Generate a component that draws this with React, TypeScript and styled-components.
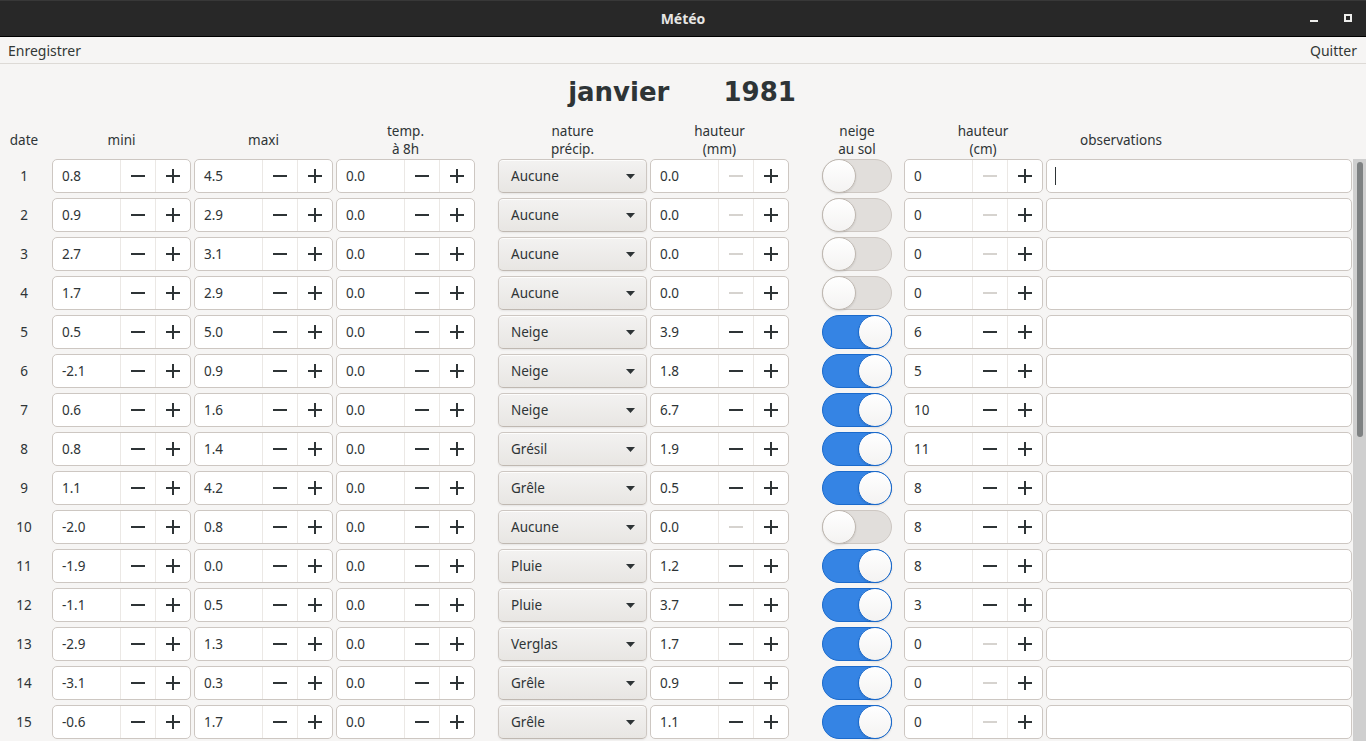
import React from "react";
import styled, { createGlobalStyle, css } from "styled-components";

const GlobalStyle = createGlobalStyle`
  html, body { margin: 0; padding: 0; height: 100%; }
  body {
    font-family: "Noto Sans", "DejaVu Sans", sans-serif;
    color: #2e3436;
    background: #f6f5f4;
    overflow: hidden;
  }
  #root { height: 100%; }
  * { box-sizing: border-box; }
`;

const Window = styled.div`
  display: flex;
  flex-direction: column;
  height: 100vh;
  background: #f6f5f4;
`;

const TitleBar = styled.header`
  display: grid;
  grid-template-columns: 1fr auto 1fr;
  align-items: center;
  height: 37px;
  background: #282828;
  border-bottom: 1px solid #000;
  box-shadow: inset 0 1px #383838;
`;

const TitleText = styled.div`
  grid-column: 2;
  font-size: 14px;
  font-weight: 700;
  color: #e6e6e4;
`;

const Controls = styled.div`
  grid-column: 3;
  display: flex;
  justify-content: flex-end;
  gap: 18px;
  padding-right: 10px;
`;

const ControlButton = styled.span`
  display: flex;
  width: 16px;
  height: 16px;
  color: #eeeeec;
`;

const MenuBar = styled.nav`
  display: flex;
  justify-content: space-between;
  align-items: center;
  height: 27px;
  padding: 0 9px 0 8px;
  border-bottom: 1px solid #dddad6;
  font-size: 14px;
  color: #333836;
`;

const MenuItem = styled.span``;

const MonthTitle = styled.h1`
  display: flex;
  justify-content: center;
  gap: 54px;
  margin: 0;
  padding-top: 13px;
  padding-right: 2px;
  font-family: "DejaVu Sans", sans-serif;
  font-weight: 700;
  font-size: 26px;
  line-height: 30px;
  color: #2e3436;
`;

const gridColumns = css`
  display: grid;
  grid-template-columns: 41px 139px 139px 139px 169px 139px 109px 139px 306px;
  column-gap: 3px;
  padding-left: 8px;
  width: 1352px;
`;

const HeaderGrid = styled.div`
  ${gridColumns};
  margin-top: 15px;
  height: 36px;
  align-items: center;
`;

const HeaderLabel = styled.div<{ $pl?: number; $pr?: number }>`
  font-size: 13.5px;
  line-height: 18px;
  text-align: center;
  color: #2e3436;
  padding-left: ${(p) => p.$pl ?? 0}px;
  padding-right: ${(p) => p.$pr ?? 0}px;
`;

const ScrollArea = styled.div`
  position: relative;
  flex: 1;
  overflow: hidden;
`;

const RowsGrid = styled.div`
  ${gridColumns};
  grid-auto-rows: 34px;
  row-gap: 5px;
  padding-top: 1px;
  align-items: center;
  font-size: 13.5px;
`;

const DateCell = styled.div`
  text-align: center;
  padding-right: 9px;
  color: #2e3436;
`;

const SpinBox = styled.div`
  display: flex;
  height: 34px;
  background: #fff;
  border: 1px solid #cdc7c2;
  border-radius: 5px;
  overflow: hidden;
`;

const SpinEntry = styled.div`
  flex: 1;
  display: flex;
  align-items: center;
  padding-left: 9px;
  color: #2e3436;
`;

const SpinButton = styled.div<{ $disabled?: boolean }>`
  display: flex;
  align-items: center;
  justify-content: center;
  width: 35px;
  border-left: 1px solid #ebe8e5;
  color: ${(p) => (p.$disabled ? "#d6d3cf" : "#2e3436")};
`;

const ComboButton = styled.div`
  justify-self: end;
  width: 149px;
  height: 34px;
  display: flex;
  align-items: center;
  justify-content: space-between;
  padding: 0 11px 0 12px;
  border: 1px solid #cdc7c2;
  border-bottom-color: #bfb8b1;
  border-radius: 5px;
  background: linear-gradient(to top, #e8e6e3, #f3f2f1);
  box-shadow: inset 0 1px rgba(255, 255, 255, 0.8), 0 1px 2px rgba(0, 0, 0, 0.07);
  color: #2e3436;
`;

const SwitchTrack = styled.div<{ $on: boolean }>`
  display: flex;
  justify-content: ${(p) => (p.$on ? "flex-end" : "flex-start")};
  margin-left: 30px;
  width: 70px;
  height: 34px;
  border-radius: 17px;
  border: 1px solid ${(p) => (p.$on ? "#1b6acb" : "#cdc7c2")};
  background: ${(p) => (p.$on ? "#3584e4" : "#e1dedb")};
`;

const SwitchKnob = styled.div<{ $on: boolean }>`
  width: 34px;
  height: 34px;
  margin: -1px;
  border-radius: 50%;
  border: 1px solid ${(p) => (p.$on ? "#1b6acb" : "#bfb8b1")};
  background: linear-gradient(to bottom, #ffffff, #f4f3f2);
  box-shadow: 0 1px 2px rgba(0, 0, 0, 0.12);
`;

const ObsEntry = styled.div`
  display: flex;
  align-items: center;
  height: 34px;
  padding-left: 8px;
  background: #fff;
  border: 1px solid #cdc7c2;
  border-radius: 5px;
`;

const Caret = styled.span`
  width: 1px;
  height: 18px;
  background: #2e3436;
`;

const ScrollTrough = styled.div`
  position: absolute;
  top: 1px;
  right: 0;
  bottom: 0;
  width: 13px;
  background: #cfcfcf;
`;

const ScrollThumb = styled.div`
  margin: 3px 0 0 4px;
  width: 6px;
  height: 275px;
  border-radius: 3px;
  background: #7e8182;
`;

const MinusIcon = () => (
  <svg width="16" height="16" viewBox="0 0 16 16" fill="currentColor">
    <rect x="1" y="7" width="14" height="2" />
  </svg>
);

const PlusIcon = () => (
  <svg width="16" height="16" viewBox="0 0 16 16" fill="currentColor">
    <rect x="1" y="7" width="14" height="2" />
    <rect x="7" y="1" width="2" height="14" />
  </svg>
);

const ArrowIcon = () => (
  <svg width="9" height="5" viewBox="0 0 9 5" fill="#2e3436">
    <polygon points="0,0 9,0 4.5,5" />
  </svg>
);

const Spin = ({ value, minusDisabled }: { value: string; minusDisabled?: boolean }) => (
  <SpinBox>
    <SpinEntry>{value}</SpinEntry>
    <SpinButton $disabled={minusDisabled}>
      <MinusIcon />
    </SpinButton>
    <SpinButton>
      <PlusIcon />
    </SpinButton>
  </SpinBox>
);

type Day = {
  d: number;
  mini: string;
  maxi: string;
  t8: string;
  nat: string;
  mm: string;
  snow: boolean;
  cm: string;
};

const days: Day[] = [
  { d: 1, mini: "0.8", maxi: "4.5", t8: "0.0", nat: "Aucune", mm: "0.0", snow: false, cm: "0" },
  { d: 2, mini: "0.9", maxi: "2.9", t8: "0.0", nat: "Aucune", mm: "0.0", snow: false, cm: "0" },
  { d: 3, mini: "2.7", maxi: "3.1", t8: "0.0", nat: "Aucune", mm: "0.0", snow: false, cm: "0" },
  { d: 4, mini: "1.7", maxi: "2.9", t8: "0.0", nat: "Aucune", mm: "0.0", snow: false, cm: "0" },
  { d: 5, mini: "0.5", maxi: "5.0", t8: "0.0", nat: "Neige", mm: "3.9", snow: true, cm: "6" },
  { d: 6, mini: "-2.1", maxi: "0.9", t8: "0.0", nat: "Neige", mm: "1.8", snow: true, cm: "5" },
  { d: 7, mini: "0.6", maxi: "1.6", t8: "0.0", nat: "Neige", mm: "6.7", snow: true, cm: "10" },
  { d: 8, mini: "0.8", maxi: "1.4", t8: "0.0", nat: "Grésil", mm: "1.9", snow: true, cm: "11" },
  { d: 9, mini: "1.1", maxi: "4.2", t8: "0.0", nat: "Grêle", mm: "0.5", snow: true, cm: "8" },
  { d: 10, mini: "-2.0", maxi: "0.8", t8: "0.0", nat: "Aucune", mm: "0.0", snow: false, cm: "8" },
  { d: 11, mini: "-1.9", maxi: "0.0", t8: "0.0", nat: "Pluie", mm: "1.2", snow: true, cm: "8" },
  { d: 12, mini: "-1.1", maxi: "0.5", t8: "0.0", nat: "Pluie", mm: "3.7", snow: true, cm: "3" },
  { d: 13, mini: "-2.9", maxi: "1.3", t8: "0.0", nat: "Verglas", mm: "1.7", snow: true, cm: "0" },
  { d: 14, mini: "-3.1", maxi: "0.3", t8: "0.0", nat: "Grêle", mm: "0.9", snow: true, cm: "0" },
  { d: 15, mini: "-0.6", maxi: "1.7", t8: "0.0", nat: "Grêle", mm: "1.1", snow: true, cm: "0" },
];

export default function App() {
  return (
    <>
      <GlobalStyle />
      <Window>
        <TitleBar>
          <TitleText>Météo</TitleText>
          <Controls>
            <ControlButton>
              <svg width="16" height="16" viewBox="0 0 16 16" fill="currentColor">
                <rect x="4" y="10" width="8" height="2" />
              </svg>
            </ControlButton>
            <ControlButton>
              <svg width="16" height="16" viewBox="0 0 16 16" fill="none" stroke="currentColor" strokeWidth="2">
                <rect x="5" y="5" width="6" height="6" />
              </svg>
            </ControlButton>
          </Controls>
        </TitleBar>
        <MenuBar>
          <MenuItem>Enregistrer</MenuItem>
          <MenuItem>Quitter</MenuItem>
        </MenuBar>
        <MonthTitle>
          <span>janvier</span>
          <span>1981</span>
        </MonthTitle>
        <HeaderGrid>
          <HeaderLabel $pr={9}>date</HeaderLabel>
          <HeaderLabel>mini</HeaderLabel>
          <HeaderLabel>maxi</HeaderLabel>
          <HeaderLabel>
            temp.
            <br />à 8h
          </HeaderLabel>
          <HeaderLabel $pl={20}>
            nature
            <br />
            précip.
          </HeaderLabel>
          <HeaderLabel>
            hauteur
            <br />
            (mm)
          </HeaderLabel>
          <HeaderLabel $pl={30} $pr={9}>
            neige
            <br />
            au sol
          </HeaderLabel>
          <HeaderLabel $pl={19}>
            hauteur
            <br />
            (cm)
          </HeaderLabel>
          <HeaderLabel $pr={156}>observations</HeaderLabel>
        </HeaderGrid>
        <ScrollArea>
          <RowsGrid>
            {days.map((r) => (
              <React.Fragment key={r.d}>
                <DateCell>{r.d}</DateCell>
                <Spin value={r.mini} />
                <Spin value={r.maxi} />
                <Spin value={r.t8} />
                <ComboButton>
                  <span>{r.nat}</span>
                  <ArrowIcon />
                </ComboButton>
                <Spin value={r.mm} minusDisabled={r.mm === "0.0"} />
                <SwitchTrack $on={r.snow}>
                  <SwitchKnob $on={r.snow} />
                </SwitchTrack>
                <Spin value={r.cm} minusDisabled={r.cm === "0"} />
                <ObsEntry>{r.d === 1 && <Caret />}</ObsEntry>
              </React.Fragment>
            ))}
          </RowsGrid>
          <ScrollTrough>
            <ScrollThumb />
          </ScrollTrough>
        </ScrollArea>
      </Window>
    </>
  );
}
